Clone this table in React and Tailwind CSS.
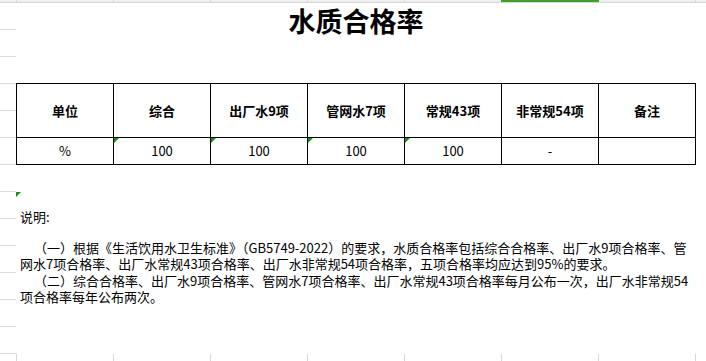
import React from "react";

const heads = ["单位", "综合", "出厂水9项", "管网水7项", "常规43项", "非常规54项", "备注"];
const vals = ["%", "100", "100", "100", "100", "-", ""];
const marks = [false, true, true, true, true, false, false];

function Strip({ top }) {
  return (
    <div
      className={
        top
          ? "relative flex h-[3px] shrink-0 bg-[#efefef] border-b border-[#d6d6d6]"
          : "flex h-[7px] shrink-0"
      }
    >
      <div className="w-[17px] shrink-0 border-r border-[#d6d6d6]" />
      {heads.map((h) => (
        <div key={h} className="w-[97px] shrink-0 border-r border-[#d6d6d6]" />
      ))}
      {top && <div className="absolute left-[501px] top-0 h-[2px] w-[98px] bg-[#4a9a2f]" />}
    </div>
  );
}

function Tri() {
  return (
    <div className="absolute left-0 top-0 h-0 w-0 border-t-[5px] border-r-[5px] border-t-[#1f8a1f] border-r-transparent" />
  );
}

export default function App() {
  return (
    <div
      className="flex h-[361px] w-[706px] flex-col overflow-hidden bg-white text-black"
      style={{ fontFamily: '"Noto Sans CJK SC", "Noto Sans", sans-serif' }}
    >
      <Strip top />
      <div className="flex h-[351px] shrink-0">
        <div className="flex w-[16px] shrink-0 flex-col">
          {Array.from({ length: 13 }).map((_, i) => (
            <div key={i} className="h-[27px] shrink-0 border-b border-[#dcdcdc]" />
          ))}
        </div>
        <div className="relative flex w-[690px] flex-col">
          <div className="h-[80px] w-[680px] shrink-0 text-center text-[27px] font-bold leading-[36px]">
            水质合格率
          </div>
          <div className="grid w-[680px] grid-cols-[repeat(7,97px)] border-l border-t border-black text-[13px]">
            {heads.map((h) => (
              <div
                key={h}
                className="flex h-[54px] items-center justify-center border-b border-r border-black font-bold"
              >
                {h}
              </div>
            ))}
            {vals.map((v, i) => (
              <div
                key={i}
                className="relative flex h-[27px] items-center justify-center border-b border-r border-black"
              >
                {marks[i] && <Tri />}
                {v}
              </div>
            ))}
          </div>
          <div className="absolute left-0 top-[189px] h-0 w-0 border-t-[5px] border-r-[5px] border-t-[#1f8a1f] border-r-transparent" />
          <div className="mt-[44px] pl-[4px] text-[13px] leading-[16px]">说明:</div>
          <div className="mt-[15px] whitespace-nowrap pl-[4px] text-[13px] leading-[16.3px]">
            <div className="pl-[14px]">（一）根据《生活饮用水卫生标准》（GB5749-2022）的要求，水质合格率包括综合合格率、出厂水9项合格率、管</div>
            <div>网水7项合格率、出厂水常规43项合格率、出厂水非常规54项合格率，五项合格率均应达到95%的要求。</div>
            <div className="pl-[14px]">（二）综合合格率、出厂水9项合格率、管网水7项合格率、出厂水常规43项合格率每月公布一次，出厂水非常规54</div>
            <div>项合格率每年公布两次。</div>
          </div>
        </div>
      </div>
      <Strip />
    </div>
  );
}
